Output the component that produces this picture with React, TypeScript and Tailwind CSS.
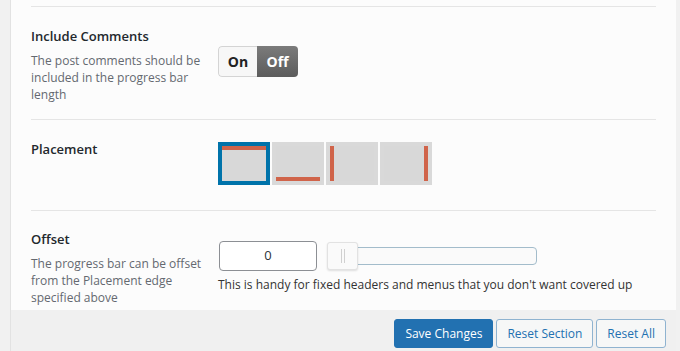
import React from 'react';

type Pos = 'top' | 'bottom' | 'left' | 'right';

const places: Pos[] = ['top', 'bottom', 'left', 'right'];

function PlaceBox({ pos, active }: { pos: Pos; active: boolean }) {
    return (
        <div className={`border-4 ${active ? 'border-[#0073aa]' : 'border-[#d9d9d9]'}`}>
            <div className="relative w-[44px] h-[35px] bg-[#d8d8d8]">
                {pos === 'top' && <div className="absolute left-0 right-0 top-0 h-[4px] bg-[#d0644a]" />}
                {pos === 'bottom' && <div className="absolute left-0 right-0 bottom-0 h-[4px] bg-[#d0644a]" />}
                {pos === 'left' && <div className="absolute left-0 top-0 bottom-0 w-[4px] bg-[#d0644a]" />}
                {pos === 'right' && <div className="absolute right-0 top-0 bottom-0 w-[4px] bg-[#d0644a]" />}
            </div>
        </div>
    );
}

export default function App() {
    return (
        <div
            className="w-[680px] h-[351px] bg-[#f1f1f1] flex overflow-hidden"
            style={{ fontFamily: '"Open Sans", "Liberation Sans", sans-serif' }}
        >
            <div className="ml-[10px] w-[666px] h-full bg-[#fcfcfc] border-l border-[#e2e2e2] flex flex-col">
                <div className="flex-1 px-[20px] pt-[6px]">
                    {/* Include Comments */}
                    <div className="border-t border-[#e5e5e5] flex h-[113px]">
                        <div className="w-[187px] shrink-0 pt-[19px]">
                            <div className="text-[13px] leading-[20px] font-semibold text-[#23282d]">Include Comments</div>
                            <div className="mt-[6px] text-[12px] leading-[17px] text-[#646970]">
                                The post comments should be included in the progress bar length
                            </div>
                        </div>
                        <div className="pt-[39px]">
                            <div className="flex h-[31px] rounded-[4px] overflow-hidden text-[14px] font-bold">
                                <div className="w-[39px] flex items-center justify-center bg-[#f7f7f7] border border-r-0 border-[#d4d4d4] rounded-l-[4px] text-[#222]">
                                    On
                                </div>
                                <div className="w-[41px] flex items-center justify-center bg-gradient-to-b from-[#7b7b7b] to-[#5c5c5c] text-white">
                                    Off
                                </div>
                            </div>
                        </div>
                    </div>

                    {/* Placement */}
                    <div className="border-t border-[#e5e5e5] flex h-[91px]">
                        <div className="w-[187px] shrink-0 pt-[19px]">
                            <div className="text-[13px] leading-[20px] font-semibold text-[#23282d]">Placement</div>
                        </div>
                        <div className="pt-[22px] flex items-start gap-[2px]">
                            {places.map((p, i) => (
                                <PlaceBox key={p} pos={p} active={i === 0} />
                            ))}
                        </div>
                    </div>

                    {/* Offset */}
                    <div className="border-t border-[#e5e5e5] flex">
                        <div className="w-[187px] shrink-0 pt-[18px]">
                            <div className="text-[13px] leading-[20px] font-semibold text-[#23282d]">Offset</div>
                            <div className="mt-[6px] text-[12px] leading-[17px] text-[#646970]">
                                The progress bar can be offset from the Placement edge specified above
                            </div>
                        </div>
                        <div className="pt-[30px]">
                            <div className="flex items-center">
                                <div className="w-[98px] h-[30px] ml-[1px] border border-[#8c8f94] rounded-[4px] bg-white flex items-center justify-center text-[13px] text-[#2c3338]">
                                    0
                                </div>
                                <div className="relative ml-[10px] w-[210px] h-[28px] flex items-center">
                                    <div className="w-full h-[18px] border border-[#a3bccb] rounded-[4px] bg-[#fafafa]" />
                                    <div className="absolute left-0 top-0 w-[31px] h-[28px] bg-[#fafafa] border border-[#e2e2e2] rounded-[3px] shadow-[0_1px_2px_rgba(0,0,0,0.12)] flex items-center justify-center gap-[2px]">
                                        <div className="w-[1px] h-[14px] bg-[#d0d0d0]" />
                                        <div className="w-[1px] h-[14px] bg-[#d0d0d0]" />
                                    </div>
                                </div>
                            </div>
                            <div className="mt-[5px] text-[12px] leading-[18px] text-[#333] whitespace-nowrap">
                                This is handy for fixed headers and menus that you don't want covered up
                            </div>
                        </div>
                    </div>
                </div>

                {/* Footer */}
                <div className="h-[41px] bg-[#f0f0f0] flex justify-end items-start pt-[9px] pr-[10px] gap-[3px] text-[12px]">
                    <button className="h-[29px] px-[10px] rounded-[3px] bg-[#2271b1] border border-[#2271b1] text-white">
                        Save Changes
                    </button>
                    <button className="h-[29px] px-[10px] rounded-[3px] bg-[#f6f7f7] border border-[#8fb3d0] text-[#2271b1]">
                        Reset Section
                    </button>
                    <button className="h-[29px] px-[10px] rounded-[3px] bg-[#f6f7f7] border border-[#8fb3d0] text-[#2271b1]">
                        Reset All
                    </button>
                </div>
            </div>
        </div>
    );
}
